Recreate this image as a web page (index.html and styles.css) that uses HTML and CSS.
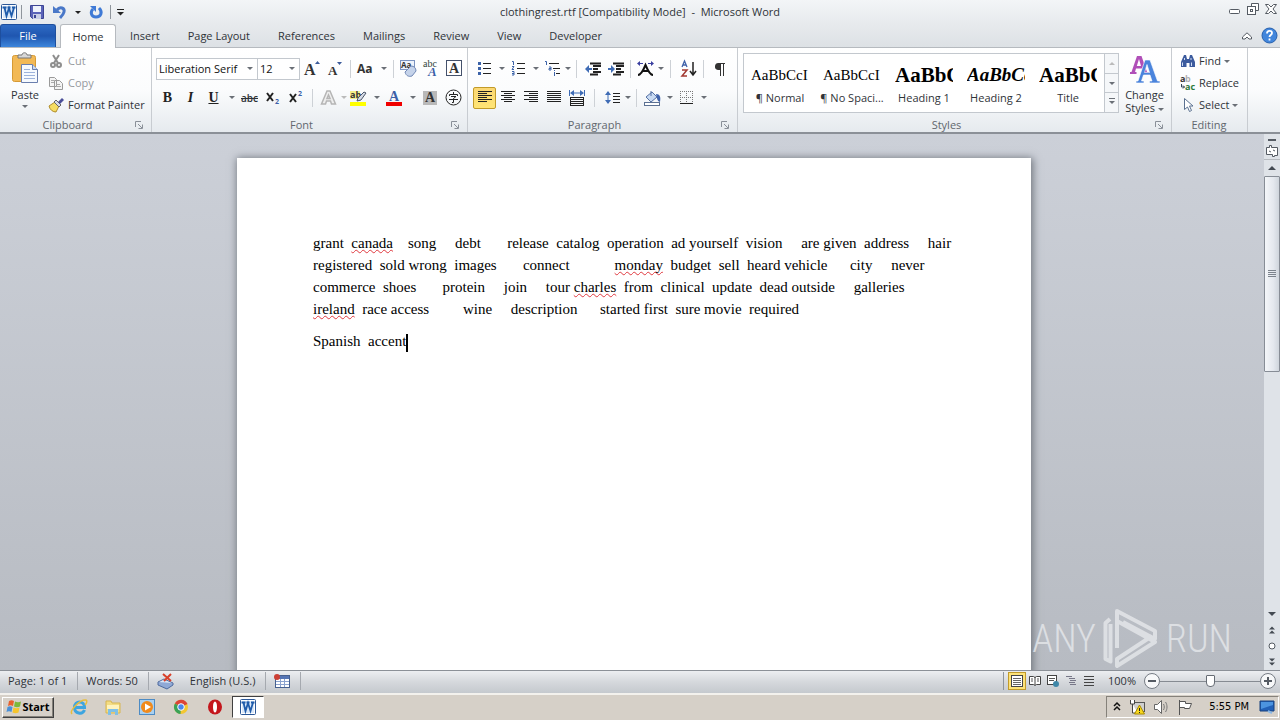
FILE: index.html
```
<!DOCTYPE html>
<html lang="en">
<head>
    <meta charset="UTF-8">
    <meta name="viewport" content="width=device-width, initial-scale=1.0">
    <title>clothingrest.rtf [Compatibility Mode] - Microsoft Word</title>
    <link rel="stylesheet" href="styles.css">
</head>
<body>
    <div class="window">
        <header class="titlebar">
            <div class="quick">
                <svg width="18" height="18" viewBox="0 0 18 18"><rect x="1.5" y="1.5" width="15" height="15" rx="1" fill="#fff" stroke="#2b5797"/><rect x="3" y="3" width="12" height="12" fill="#dbe8f8"/><path d="M2.500 4.500h4M7.500 4.500h3M12 4.500h3.500M4.500 4.500L6.500 13 9 5l2.500 8 2.500-8.500" fill="none" stroke="#1f5cab" stroke-width="1.800"/></svg>
                <span class="bar"></span>
                <button class="tool" aria-label="Save"><svg width="16" height="16" viewBox="0 0 16 16"><path d="M1.5 1.5h13v13h-11l-2-2z" fill="#5a63b8" stroke="#3c4494"/><rect x="4" y="2" width="8" height="6" fill="#eef2fb"/><rect x="4" y="10" width="8" height="5" fill="#c9cfe6"/><rect x="5" y="11" width="2" height="3" fill="#3c4494"/></svg></button>
                <button class="tool" aria-label="Undo"><svg width="16" height="16" viewBox="0 0 16 16"><path d="M5 6c3-4 8-2 7 2-.5 2-2 4-4 6" fill="none" stroke="#4a78c8" stroke-width="3"/><path d="M1 2v7h8z" fill="#4a78c8"/></svg></button>
                <button class="arrow" aria-label="Undo history"><i class="tri dark"></i></button>
                <button class="tool" aria-label="Repeat"><svg width="16" height="16" viewBox="0 0 16 16"><path d="M5 5c-3 3-2 8 3 8s7-5 3-9" fill="none" stroke="#3f7ad6" stroke-width="3"/><path d="M2 2h6v6z" fill="#3f7ad6"/></svg></button>
                <span class="bar"></span>
                <button class="arrow" aria-label="Customize toolbar"><svg width="7" height="7" viewBox="0 0 7 7"><path d="M0 .5h7" stroke="#222"/><path d="M0 3h7L3.500 6.500z" fill="#222"/></svg></button>
            </div>
            <h1>clothingrest.rtf [Compatibility Mode]&nbsp; -&nbsp; Microsoft Word</h1>
            <div class="controls">
                <button aria-label="Minimize"><svg width="12" height="12" viewBox="0 0 12 12"><rect x=".5" y="6.500" width="10" height="4" rx="1" fill="#fff" stroke="#555b63"/></svg></button>
                <button aria-label="Restore"><svg width="12" height="12" viewBox="0 0 12 12"><path d="M4.500 3.500v-3h7v7h-3" fill="#fff" stroke="#555b63"/><rect x=".5" y="3.500" width="8" height="8" fill="#fff" stroke="#555b63"/><rect x="3.500" y="6.500" width="2" height="2" fill="none" stroke="#555b63"/></svg></button>
                <button aria-label="Close"><svg width="12" height="12" viewBox="0 0 12 12"><path d="M.5 1.500h3l2.500 2.500 2.500-2.500h3L8 6l3.500 4.500h-3L6 8l-2.500 2.500h-3L4 6z" fill="#fff" stroke="#555b63"/></svg></button>
            </div>
        </header>

        <nav class="tabs">
            <button class="file">File</button>
            <button class="active">Home</button>
            <button>Insert</button>
            <button>Page Layout</button>
            <button>References</button>
            <button>Mailings</button>
            <button>Review</button>
            <button>View</button>
            <button>Developer</button>
            <div class="help">
                <svg width="10" height="8" viewBox="0 0 10 8"><path d="M.5 5L5 .8 9.500 5v2H7L5 5 3 7H.5z" fill="#fff" stroke="#555b63"/></svg>
                <svg width="17" height="17" viewBox="0 0 17 17"><circle cx="8.500" cy="8.500" r="7.500" fill="#4286dc" stroke="#2861ad"/><path d="M6 6.500c0-3.500 5-3.500 5-.5 0 2-2.500 2-2.500 4M8.500 11.500v2" fill="none" stroke="#fff" stroke-width="1.800"/></svg>
            </div>
        </nav>

        <div class="ribbon">
            <section class="group clipboard">
                <div class="body">
                    <button class="big">
                        <svg width="28" height="32" viewBox="0 0 28 32"><rect x="1.500" y="3.500" width="23" height="26" rx="2" fill="#f2b956" stroke="#d69a35"/><path d="M7 6V3h4c0-3 5-3 5 0h4v3z" fill="#d8d8d8" stroke="#777"/><path d="M10.500 12.500h11l5 5v13h-16z" fill="#f6faff" stroke="#6a7fae"/><path d="M21.500 12.500v5h5" fill="#cbdaf0" stroke="#6a7fae"/><path d="M13 17.500h6M13 20.500h11M13 23.500h11M13 26.500h11" stroke="#9db3dc"/></svg>
                        <span>Paste</span>
                        <i class="tri"></i>
                    </button>
                    <div class="stack">
                        <button class="line off"><svg width="16" height="16" viewBox="0 0 16 16"><path d="M5 2l5 8M11 2l-5 8" stroke="#8e8e8e" stroke-width="2"/><circle cx="5" cy="12" r="2" fill="none" stroke="#8e8e8e" stroke-width="2"/><circle cx="11" cy="12" r="2" fill="none" stroke="#8e8e8e" stroke-width="2"/></svg>Cut</button>
                        <button class="line off"><svg width="16" height="16" viewBox="0 0 16 16"><path d="M1.500 2.500h5l2 2v7h-7zM6.500 5.500h5l3 3v6h-8z" fill="#f4f4f4" stroke="#9a9a9a"/><path d="M3 5.500h3M3 7.500h3M8 9.500h4M8 11.500h5" stroke="#aaa"/></svg>Copy</button>
                        <button class="line"><svg width="16" height="16" viewBox="0 0 16 16"><path d="M1 9l6-4 4 4-3 6c-3 0-6-2-7-6z" fill="#f5dc62" stroke="#b08d2c"/><path d="M6 5l2-2 5 5-2 2z" fill="#d5d9e8" stroke="#666"/><path d="M10 5l4-4 2 2-4 4z" fill="#4a4e98"/></svg>Format Painter</button>
                    </div>
                </div>
                <footer><h2>Clipboard</h2><svg class="launch" width="8" height="8" viewBox="0 0 8 8"><path d="M.5 6V.5H6M3 3l4 4M7.500 3.500v4h-4" fill="none" stroke="#8a9099"/></svg></footer>
            </section>

            <section class="group font">
                <div class="body rows">
                    <div class="row">
                        <span class="combo name"><select aria-label="Font"><option>Liberation Serif</option></select></span>
                        <span class="combo size"><select aria-label="Font size"><option>12</option></select></span>
                        <button class="tool" aria-label="Grow font"><svg width="17" height="17" viewBox="0 0 17 17"><text x="0" y="15" class="serif" font-size="16">A</text><path d="M11 4l2.500-3L16 4z" fill="#3b5a9a"/></svg></button>
                        <button class="tool" aria-label="Shrink font"><svg width="17" height="17" viewBox="0 0 17 17"><text x="1" y="15" class="serif" font-size="13">A</text><path d="M10 2l2.500 3L15 2z" fill="#3b5a9a"/></svg></button>
                        <span class="sep"></span>
                        <button class="tool" aria-label="Change case"><svg width="17" height="17" viewBox="0 0 17 17"><text x="0" y="13" class="sans" font-size="12">Aa</text></svg></button>
                        <button class="arrow" aria-label="Case options"><i class="tri"></i></button>
                        <span class="sep"></span>
                        <button class="tool" aria-label="Clear formatting"><svg width="17" height="17" viewBox="0 0 17 17"><rect x=".5" y=".5" width="14" height="9" fill="#eef3fb" stroke="#7b93c0"/><text x="1" y="8" class="sans" font-size="8">Aa</text><path d="M5 12l6-6c3 0 5 2 5 5l-4 5c-3 1-6 0-7-4z" fill="#c5d3ea" stroke="#7188b5"/></svg></button>
                        <button class="tool" aria-label="Phonetic guide"><svg width="17" height="17" viewBox="0 0 17 17"><text x="0" y="7" class="ruby" font-size="10">abc</text><text x="5" y="16" class="serif blue" font-style="italic" font-size="13">A</text></svg></button>
                        <button class="tool" aria-label="Character border"><svg width="17" height="17" viewBox="0 0 17 17"><rect x=".5" y=".5" width="15" height="15" fill="#fff" stroke="#44516b"/><text x="3" y="13" class="serif" font-size="14">A</text></svg></button>
                    </div>
                    <div class="row">
                        <button class="tool mark"><b>B</b></button>
                        <button class="tool mark"><em>I</em></button>
                        <button class="tool mark"><u>U</u></button>
                        <button class="arrow" aria-label="Underline style"><i class="tri"></i></button>
                        <button class="tool strike">abc</button>
                        <button class="tool" aria-label="Subscript"><svg width="17" height="17" viewBox="0 0 17 17"><path d="M3 4l6 8M9 4l-6 8" stroke="#222" stroke-width="2"/><text x="11" y="15" class="sans blue" font-size="7">2</text></svg></button>
                        <button class="tool" aria-label="Superscript"><svg width="17" height="17" viewBox="0 0 17 17"><path d="M3 5l6 8M9 5l-6 8" stroke="#222" stroke-width="2"/><text x="11" y="7" class="sans blue" font-size="7">2</text></svg></button>
                        <span class="sep wide"></span>
                        <button class="tool" aria-label="Text effects"><svg width="17" height="17" viewBox="0 0 17 17"><path d="M1.500 15L7 2h3l5.500 13h-4l-1-3h-4l-1 3zM7 9.500h3L8.500 6z" fill="#eee" stroke="#b5b5b5" stroke-width="1.500"/></svg></button>
                        <button class="arrow tight" aria-label="Text effect options"><i class="tri pale"></i></button>
                        <button class="tool" aria-label="Highlight"><svg width="17" height="17" viewBox="0 0 17 17"><rect x="0" y="13" width="16" height="4" fill="#ff0"/><rect x="0" y="2" width="10" height="8" fill="#f5f08a"/><text x="0" y="9" class="sans" font-size="9">ab</text><path d="M7 12l1-3 6-6 2 1-5 7z" fill="#d5dbe6" stroke="#4a5568"/></svg></button>
                        <button class="arrow" aria-label="Highlight color"><i class="tri"></i></button>
                        <button class="tool" aria-label="Font color"><svg width="17" height="17" viewBox="0 0 17 17"><rect x="0" y="13" width="16" height="4" fill="#f00000"/><text x="3" y="12" class="serif blue" font-size="14">A</text></svg></button>
                        <button class="arrow" aria-label="Font color options"><i class="tri"></i></button>
                        <button class="tool" aria-label="Character shading"><svg width="17" height="17" viewBox="0 0 17 17"><rect x="1" y="2" width="14" height="14" fill="#b9b9b9"/><text x="3" y="13" class="serif" font-size="14">A</text></svg></button>
                        <button class="tool" aria-label="Enclose characters"><svg width="17" height="17" viewBox="0 0 17 17"><circle cx="8.500" cy="8.500" r="7.500" fill="none" stroke="#222"/><path d="M8.500 3v2M4.500 7V5.500h8V7M6 7.500h5L8.500 9.500v4H7M4 10.500h9" fill="none" stroke="#222"/></svg></button>
                    </div>
                </div>
                <footer><h2>Font</h2><svg class="launch" width="8" height="8" viewBox="0 0 8 8"><path d="M.5 6V.5H6M3 3l4 4M7.500 3.500v4h-4" fill="none" stroke="#8a9099"/></svg></footer>
            </section>

            <section class="group para">
                <div class="body rows">
                    <div class="row">
                        <button class="tool" aria-label="Bullets"><svg width="15" height="15" viewBox="0 0 15 15"><path d="M1 2.500h3M1 7.500h3M1 12.500h3" stroke="#3b62a8" stroke-width="3"/><path d="M6 2.500h8M6 7.500h8M6 12.500h8" stroke="#222"/></svg></button>
                        <button class="arrow" aria-label="Bullet options"><i class="tri"></i></button>
                        <button class="tool" aria-label="Numbering"><svg width="15" height="15" viewBox="0 0 15 15"><path d="M1 .5h1.500V4M1 5.500h2L1 8.500h2M1 10.500h2v3.500H1M1 12.500h2" fill="none" stroke="#3b62a8"/><path d="M6 2.500h8M6 7.500h8M6 12.500h8" stroke="#222"/></svg></button>
                        <button class="arrow" aria-label="Numbering options"><i class="tri"></i></button>
                        <button class="tool" aria-label="Multilevel list"><svg width="17" height="15" viewBox="0 0 17 15"><path d="M1 .5h1.500V4M5 6h2v3H5V7.500h2M10.500 11v4M10.500 9v1" fill="none" stroke="#3b62a8"/><path d="M5 2.500h10M9 7.500h7M12 12.500h4" stroke="#222"/></svg></button>
                        <button class="arrow tight" aria-label="Multilevel options"><i class="tri"></i></button>
                        <span class="sep wide"></span>
                        <button class="tool" aria-label="Decrease indent"><svg width="16" height="14" viewBox="0 0 16 14"><path d="M5 1.500h11M8 4h8M8 7h5M8 10h8M5 12.500h8" stroke="#222" stroke-width="2"/><path d="M0 7l4-4v3h3v2H4v3z" fill="#3f6cb5"/></svg></button>
                        <button class="tool" aria-label="Increase indent"><svg width="16" height="14" viewBox="0 0 16 14"><path d="M5 1.500h11M8 4h8M8 7h5M8 10h8M5 12.500h8" stroke="#222" stroke-width="2"/><path d="M7 7L3 3v3H0v2h3v3z" fill="#3f6cb5"/></svg></button>
                        <span class="sep"></span>
                        <button class="tool" aria-label="Asian layout"><svg width="17" height="15" viewBox="0 0 17 15"><path d="M1 14c3 0 5-4 7.500-10C11 10 13 14 16 14M5 10h7" fill="none" stroke="#111" stroke-width="2"/><path d="M0 2.500L3 0v2h3v1H3v2zM17 2.500L14 0v2h-3v1h3v2z" fill="#3a3fa0"/></svg></button>
                        <button class="arrow tight" aria-label="Asian layout options"><i class="tri"></i></button>
                        <span class="sep wider"></span>
                        <button class="tool" aria-label="Sort"><svg width="16" height="17" viewBox="0 0 16 17"><path d="M1 7l2.500-6L6 7M2 5h3" fill="none" stroke="#3f62aa" stroke-width="1.300"/><path d="M1 10h5l-5 6h5" fill="none" stroke="#a33a33" stroke-width="1.500"/><path d="M12 2v12M9 11l3 4 3-4" fill="none" stroke="#222" stroke-width="1.500"/></svg></button>
                        <span class="sep"></span>
                        <button class="tool" aria-label="Show paragraph marks"><svg width="12" height="14" viewBox="0 0 12 14"><path d="M6 1h6v1h-1v12h-1V2H8v12H7V8H5a3.500 3.500 0 0 1 1-7z" fill="#333"/></svg></button>
                    </div>
                    <div class="row">
                        <button class="tool on" aria-label="Align left"><svg width="14" height="13" viewBox="0 0 14 13"><path d="M0 .5h14M0 2.500h9M0 4.500h14M0 6.500h9M0 8.500h14M0 10.500h9" stroke="#222"/></svg></button>
                        <button class="tool" aria-label="Center"><svg width="14" height="13" viewBox="0 0 14 13"><path d="M0 .5h14M3 2.500h8M0 4.500h14M3 6.500h8M0 8.500h14M3 10.500h8" stroke="#222"/></svg></button>
                        <button class="tool" aria-label="Align right"><svg width="14" height="13" viewBox="0 0 14 13"><path d="M0 .5h14M5 2.500h9M0 4.500h14M5 6.500h9M0 8.500h14M5 10.500h9" stroke="#222"/></svg></button>
                        <button class="tool" aria-label="Justify"><svg width="14" height="13" viewBox="0 0 14 13"><path d="M0 .5h14M0 2.500h14M0 4.500h14M0 6.500h14M0 8.500h14M0 10.500h14" stroke="#222"/></svg></button>
                        <button class="tool" aria-label="Distributed"><svg width="16" height="16" viewBox="0 0 16 16"><path d="M.5 0v6M15.500 0v6M2 3h12" stroke="#3f6cb5"/><path d="M1 3l4-3v6zM15 3l-4-3v6z" fill="#3f6cb5"/><path d="M1 7.500h14M2 9.500h12M2 11.500h12M2 13.500h12M1 15.500h14M1.500 7v9M14.500 7v9" stroke="#222"/></svg></button>
                        <span class="sep wider"></span>
                        <button class="tool" aria-label="Line spacing"><svg width="16" height="15" viewBox="0 0 16 15"><path d="M3 2v11" stroke="#3f6cb5"/><path d="M0 5l3-4 3 4zM0 10l3 4 3-4z" fill="#3f6cb5"/><path d="M8 3.500h7M8 6.500h7M8 9.500h7M8 12.500h7" stroke="#222"/></svg></button>
                        <button class="arrow tight" aria-label="Spacing options"><i class="tri"></i></button>
                        <span class="sep wide"></span>
                        <button class="tool" aria-label="Shading"><svg width="17" height="16" viewBox="0 0 17 16"><path d="M2 7l6-5 5 5-6 5z" fill="#c8daf2" stroke="#5571a5"/><path d="M7 1v5" stroke="#5571a5"/><path d="M12 4c4 0 5 3 4 8-3-1-3-4-4-8z" fill="#3f62aa"/><rect x=".5" y="12.500" width="15" height="3" fill="#fff" stroke="#5c7193"/></svg></button>
                        <button class="arrow" aria-label="Shading color"><i class="tri"></i></button>
                        <button class="tool" aria-label="Borders"><svg width="14" height="14" viewBox="0 0 14 14"><path d="M.5 0v13M6.500 0v13M12.500 0v13M0 .5h13M0 6.500h13" stroke="#777" stroke-dasharray="1 1"/><path d="M0 12.500h13" stroke="#222"/></svg></button>
                        <button class="arrow" aria-label="Border options"><i class="tri"></i></button>
                    </div>
                </div>
                <footer><h2>Paragraph</h2><svg class="launch" width="8" height="8" viewBox="0 0 8 8"><path d="M.5 6V.5H6M3 3l4 4M7.500 3.500v4h-4" fill="none" stroke="#8a9099"/></svg></footer>
            </section>

            <section class="group styles">
                <div class="body">
                    <div class="gallery">
                        <button class="style"><span class="sample">AaBbCcI</span><span>¶ Normal</span></button>
                        <button class="style"><span class="sample">AaBbCcI</span><span>¶ No Spaci...</span></button>
                        <button class="style"><span class="sample heading">AaBbC</span><span>Heading 1</span></button>
                        <button class="style"><span class="sample slant">AaBbCc</span><span>Heading 2</span></button>
                        <button class="style"><span class="sample heading">AaBbC</span><span>Title</span></button>
                        <div class="scroller">
                            <button aria-label="Scroll up"><i class="tri up pale"></i></button>
                            <button aria-label="Scroll down"><i class="tri"></i></button>
                            <button aria-label="More styles"><i class="tri more"></i></button>
                        </div>
                    </div>
                    <button class="big change">
                        <svg width="30" height="30" viewBox="0 0 30 30"><path d="M0 20v-2h1.500L7 2h4.500L17 18h2v2h-7v-2h1l-1-3.500H6L5 18h1.500v2zM6.800 12H11L9 5z" fill="#b04fb8"/><path d="M6 29v-2h2l7-21h5l7.500 21H30v2H19.500v-2H22l-2-6h-6.500l-2 6H14v2zM14.500 18.500h5l-2.500-8z" fill="#4a84dc" stroke="#fff" stroke-width=".6"/></svg>
                        <span>Change</span>
                        <span>Styles <i class="tri"></i></span>
                    </button>
                </div>
                <footer><h2>Styles</h2><svg class="launch" width="8" height="8" viewBox="0 0 8 8"><path d="M.5 6V.5H6M3 3l4 4M7.500 3.500v4h-4" fill="none" stroke="#8a9099"/></svg></footer>
            </section>

            <section class="group editing">
                <div class="body">
                    <div class="stack">
                        <button class="line"><svg width="16" height="16" viewBox="0 0 16 16"><path d="M1 14V9l3-7h2l1 4h2l1-4h2l3 7v5H9.500v-4h-3v4z" fill="#3c5b9e"/><path d="M2.500 13V9.500M11.500 13V9.500M4.500 5v2M11 5v2" stroke="#cfdcf3"/></svg>Find <i class="tri"></i></button>
                        <button class="line"><svg width="16" height="16" viewBox="0 0 16 16"><text x="0" y="7" class="sans" font-size="9">a</text><text x="5" y="7" class="sans" font-size="9" fill-opacity=".4">b</text><text x="5" y="15" class="sans green" font-size="9">ac</text><path d="M1.500 9v3h3M3 10.500L4.500 12 3 13.500" fill="none" stroke="#345"/></svg>Replace</button>
                        <button class="line"><svg width="16" height="16" viewBox="0 0 16 16"><path d="M4.500 1.500v11l3-2.500 2 4.500 2-1-2-4.500h3.500z" fill="#fff" stroke="#5b7191"/></svg>Select <i class="tri"></i></button>
                    </div>
                </div>
                <footer class="plain"><h2>Editing</h2></footer>
            </section>
        </div>

        <div class="workspace">
            <main class="desk">
                <article class="page">
                    <p>grant  <u class="typo">canada</u>    song     debt       release  catalog  operation  ad yourself  vision     are given  address     hair
registered  sold wrong  images       connect            <u class="typo">monday</u>  budget  sell  heard vehicle      city     never
commerce  shoes       protein     join     tour <u class="typo">charles</u>  from  clinical  update  dead outside     galleries
<u class="typo">ireland</u>  race access         wine     description      started first  sure movie  required</p>
                    <p>Spanish  accent<span class="caret"></span></p>
                </article>
                <div class="watermark">
                    <span>ANY</span>
                    <svg width="56" height="62" viewBox="0 0 56 62"><path d="M7 11L2.500 15v36l5 2.500V16M14 40V3l38 20v8L20 14M14 13l38 21-38 24v-7l35-23" fill="none" stroke="#e6e8eb" stroke-width="4" stroke-linejoin="round"/></svg>
                    <span>RUN</span>
                </div>
            </main>
            <aside class="scroll">
                <button aria-label="Split"><svg width="8" height="2" viewBox="0 0 8 2"><path d="M0 1h8" stroke="#555b63" stroke-width="2"/></svg></button>
                <button class="ruler" aria-label="Ruler"><svg width="12" height="12" viewBox="0 0 12 12"><path d="M.5 2.500h3V.5h2v2h6v8h-3v1h-2v-2h-6zM3 6l2 1M7 5l2 1" fill="#fff" stroke="#555b63"/></svg></button>
                <button class="step" aria-label="Scroll up"><i class="tri up large"></i></button>
                <div class="thumb"><svg width="8" height="7" viewBox="0 0 8 7"><path d="M0 .5h8M0 2.500h8M0 4.500h8M0 6.500h8" stroke="#7c838c"/></svg></div>
                <div class="track"></div>
                <button class="step" aria-label="Scroll down"><i class="tri large"></i></button>
                <button class="step" aria-label="Previous page"><svg width="8" height="8" viewBox="0 0 8 8"><path d="M1 3.500L4 .5l3 3zM1 7.500l3-3 3 3z" fill="#444a52"/></svg></button>
                <button class="step" aria-label="Browse object"><svg width="8" height="8" viewBox="0 0 8 8"><circle cx="4" cy="4" r="3" fill="#fff" stroke="#555b63"/></svg></button>
                <button class="step" aria-label="Next page"><svg width="8" height="8" viewBox="0 0 8 8"><path d="M1 .5l3 3 3-3zM1 4.500l3 3 3-3z" fill="#444a52"/></svg></button>
            </aside>
        </div>

        <div class="status">
            <span class="cell">Page: 1 of 1</span>
            <span class="cell">Words: 50</span>
            <span class="cell lang"><svg width="17" height="16" viewBox="0 0 17 16"><path d="M1 9l6-3 9 4-6 4z" fill="#dce8f8" stroke="#4e6b9e"/><path d="M1 9v3l9 4 6-4v-2" fill="#8fa9d6" stroke="#4e6b9e"/><path d="M6 1l8 7M14 1L7 8" stroke="#d8402a" stroke-width="2"/></svg>English (U.S.)</span>
            <span class="cell"><svg width="16" height="14" viewBox="0 0 16 14"><rect x="1.500" y="1.500" width="14" height="12" fill="#fff" stroke="#46608f"/><rect x="2" y="2" width="13" height="3" fill="#5575b5"/><path d="M2 7.500h13M2 10.500h13M6.500 5v8M10.500 5v8" stroke="#8ca3cf"/><circle cx="3" cy="3" r="3" fill="#cc3f35"/></svg></span>
            <div class="views">
                <button class="on" aria-label="Print layout"><svg width="12" height="12" viewBox="0 0 12 12"><rect x=".5" y=".5" width="11" height="11" fill="#fff" stroke="#444"/><path d="M2 3.500h8M2 5.500h8M2 7.500h8M2 9.500h8" stroke="#666"/></svg></button>
                <button aria-label="Full screen reading"><svg width="12" height="12" viewBox="0 0 12 12"><path d="M.5 1.500h4l1.500 1 1.500-1h4v8h-4l-1.500 1-1.500-1h-4zM6 2v8" fill="#fff" stroke="#444"/><path d="M2 4h2M2 6h2M8 4h2M8 6h2" stroke="#555"/></svg></button>
                <button aria-label="Web layout"><svg width="12" height="12" viewBox="0 0 12 12"><rect x=".5" y=".5" width="9" height="9" fill="#fff" stroke="#444"/><path d="M2 3.500h6M2 5.500h5" stroke="#555"/><circle cx="9" cy="9" r="3" fill="#3f87a8"/></svg></button>
                <button aria-label="Outline"><svg width="12" height="12" viewBox="0 0 12 12"><path d="M1 1.500h6M4 3.500h6M5 5.500h6M4 7.500h6M5 9.500h6" stroke="#778"/></svg></button>
                <button aria-label="Draft"><svg width="12" height="12" viewBox="0 0 12 12"><path d="M1 1.500h10M1 4.500h10M1 7.500h10M1 10.500h10" stroke="#444"/></svg></button>
            </div>
            <label class="percent" for="zoom">100%</label>
            <button class="round" aria-label="Zoom out"><svg width="8" height="8" viewBox="0 0 8 8"><path d="M0 4h8" stroke="#555b63" stroke-width="2"/></svg></button>
            <input id="zoom" type="range" min="0" max="200" value="100">
            <button class="round" aria-label="Zoom in"><svg width="8" height="8" viewBox="0 0 8 8"><path d="M0 4h8M4 0v8" stroke="#555b63" stroke-width="2"/></svg></button>
        </div>

        <div class="taskbar">
            <button class="start"><svg width="16" height="16" viewBox="0 0 16 16"><path d="M3 2c2-1 3-1 5 0L7 7c-2-1-3-1-5 0z" fill="#e8602c"/><path d="M9 2.500c2 1 4 1 6 0l-1 5c-2 1-4 1-6 0z" fill="#7cb83a"/><path d="M1.500 8c2-1 3-1 5 0l-1 5c-2-1-3-1-5 0z" fill="#4a90d8"/><path d="M7.500 8.500c2 1 4 1 6 0l-1 5c-2 1-4 1-6 0z" fill="#f6c52d"/></svg>Start</button>
            <div class="apps">
                <button aria-label="Internet Explorer"><svg width="18" height="18" viewBox="0 0 18 18"><path d="M14.500 12c-2 5-10 4-10-2.500C4.500 2 14.500 2 14.500 9.500h-9" fill="none" stroke="#3da5e0" stroke-width="3"/><path d="M2 16C-1 13 10 1 16 2c2 1 0 4-1 5" fill="none" stroke="#e7bd3c" stroke-width="1.500"/></svg></button>
                <button aria-label="Explorer"><svg width="18" height="18" viewBox="0 0 18 18"><path d="M2 3h5l1 2h8v10H2z" fill="#f3dc83" stroke="#d7b550"/><path d="M3 7h12v4H3z" fill="#fff3bd"/><path d="M4 17v-6h10v6h-3v-3H7v3z" fill="#7fc0e6"/></svg></button>
                <button aria-label="Media Player"><svg width="18" height="18" viewBox="0 0 18 18"><rect x="1.500" y="1.500" width="15" height="15" fill="#a9d0f0" stroke="#4d8bc4"/><circle cx="9" cy="9" r="6" fill="#f08a1c"/><path d="M7 5.500l6 3.500-6 3.500z" fill="#fff"/></svg></button>
                <button aria-label="Chrome"><svg width="18" height="18" viewBox="0 0 18 18"><circle cx="9" cy="9" r="7" fill="#f3c732"/><path d="M9 9L2.900 5.500A7 7 0 0 1 15.500 6z" fill="#dc4437"/><path d="M9 9L2.900 5.500A7 7 0 0 0 8.500 16z" fill="#3ba257"/><circle cx="9" cy="9" r="3.300" fill="#4a87ec" stroke="#fff"/></svg></button>
                <button aria-label="Opera"><svg width="18" height="18" viewBox="0 0 18 18"><ellipse cx="9" cy="9" rx="7" ry="7.500" fill="#c4161c"/><ellipse cx="9" cy="9" rx="2" ry="5.500" fill="#fff"/></svg></button>
                <button class="open" aria-label="Word"><svg width="18" height="18" viewBox="0 0 18 18"><rect x="1.500" y="1.500" width="15" height="15" rx="1" fill="#fff" stroke="#2b5797"/><rect x="3" y="3" width="12" height="12" fill="#dbe8f8"/><path d="M2.500 4.500h4M7.500 4.500h3M12 4.500h3.500M4.500 4.500L6.500 13 9 5l2.500 8 2.500-8.500" fill="none" stroke="#1f5cab" stroke-width="1.800"/></svg></button>
            </div>
            <div class="tray">
                <svg width="8" height="10" viewBox="0 0 8 10"><path d="M1 4l3-3 3 3M1 8l3-3 3 3" fill="none" stroke="#111" stroke-width="1.500"/></svg>
                <svg width="16" height="16" viewBox="0 0 16 16"><rect x="3.500" y="3.500" width="12" height="9" fill="#cfcfcf" stroke="#555"/><path d="M1.500 1v4h4V1M3.500 5v9H9" fill="#fff" stroke="#444"/><path d="M10.500 6l5 9h-10z" fill="#f7d71e" stroke="#a88a00"/><path d="M10.500 9v3M10.500 13v1" stroke="#222"/></svg>
                <svg width="16" height="16" viewBox="0 0 16 16"><path d="M1.500 5.500h3l4-4v13l-4-4h-3z" fill="#fff" stroke="#666"/><path d="M10.500 5c1 2 1 4 0 6M12.500 3c2 3 2 7 0 10" fill="none" stroke="#777"/></svg>
                <svg width="16" height="16" viewBox="0 0 16 16"><path d="M2.500 1v15M2.500 2.500h6v2h6l-2 5h-5v-1h-5z" fill="#fff" stroke="#555"/></svg>
                <time>5:55 PM</time>
                <svg width="16" height="14" viewBox="0 0 16 14"><path d="M1 1h14v10H1z" fill="#2261b8" stroke="#17407c"/><path d="M2 2h12v3L2 9z" fill="#4c94e0"/><path d="M9 11l4 2" stroke="#89b8e8" stroke-width="2"/></svg>
            </div>
        </div>
    </div>
</body>
</html>
```
FILE: styles.css
```
* {
    box-sizing: border-box;
}
body {
    margin: 0;
    font-family: "Open Sans", "Noto Sans", sans-serif;
    font-size: 11px;
    line-height: 14px;
    color: #2f3338;
}
button {
    display: flex;
    align-items: center;
    justify-content: center;
    margin: 0;
    padding: 0;
    border: none;
    background: none;
    font: inherit;
    color: inherit;
}
svg {
    display: block;
    flex: none;
    overflow: visible;
}
h1, h2 {
    margin: 0;
    font-size: 11px;
    font-weight: normal;
}
.window {
    display: flex;
    flex-direction: column;
    height: 100vh;
    overflow: hidden;
}

/* Title bar */
.titlebar {
    display: grid;
    grid-template-columns: 1fr auto 1fr;
    align-items: center;
    height: 24px;
    background: linear-gradient(#f3f5f7, #e7eaed);
}
.quick {
    display: flex;
    align-items: center;
}
.quick .bar {
    width: 1px;
    height: 14px;
    margin: 0 3px;
    background: #8f959c;
}
.controls {
    display: flex;
    justify-content: flex-end;
    gap: 6px;
    padding: 0 3px 6px 0;
}

/* Tabs */
.tabs {
    display: flex;
    height: 24px;
    background: linear-gradient(#e7eaed, #dde1e5);
    border-bottom: 1px solid #b6babf;
}
.tabs button {
    padding: 0 14px;
}
.tabs .file {
    width: 56px;
    margin-right: 4px;
    border: 1px solid #1e4f9e;
    border-bottom: none;
    border-radius: 3px 3px 0 0;
    background: linear-gradient(#2f6bc4, #1f56b0 50%, #3d86dc);
    color: #fff;
}
.tabs .active {
    width: 56px;
    height: 24px;
    border: 1px solid #b6babf;
    border-bottom: none;
    border-radius: 3px 3px 0 0;
    background: #fff;
}
.help {
    display: flex;
    align-items: center;
    gap: 9px;
    margin-left: auto;
    padding-right: 2px;
}

/* Ribbon */
.ribbon {
    display: flex;
    height: 86px;
    background: linear-gradient(#fff, #fbfcfd 50%, #e6eaee);
    border-bottom: 2px solid #8b9097;
}
.group {
    display: flex;
    flex-direction: column;
    border-right: 1px solid #c8ccd1;
}
.body {
    display: flex;
    flex: 1;
    padding: 2px 0 0 6px;
}
.group footer {
    display: grid;
    grid-template-columns: 1fr 15px;
    align-items: center;
    height: 14px;
    padding-right: 1px;
    color: #62676e;
}
.group .plain {
    display: block;
}
.group h2 {
    text-align: center;
}
.clipboard {
    width: 152px;
}
.font {
    width: 316px;
}
.para {
    width: 270px;
}
.styles {
    width: 434px;
}
.editing {
    width: 76px;
}
.font .body {
    padding-left: 4px;
}
.para .body, .styles .body {
    padding-left: 5px;
}
.rows {
    flex-direction: column;
    gap: 6px;
    padding-top: 9px;
}
.row {
    display: flex;
    align-items: center;
    height: 23px;
}
.tool {
    width: 23px;
    height: 22px;
}
.tool.on {
    border: 1px solid #c29b29;
    border-radius: 2px;
    background: linear-gradient(#fbd774, #ffe575);
}
.arrow {
    width: 13px;
    height: 22px;
}
.para .arrow {
    width: 11px;
}
.arrow.tight {
    width: 7px;
}
.tri {
    display: inline-block;
    border: 3px solid transparent;
    border-top-color: #6a6f76;
    border-bottom: none;
    vertical-align: middle;
}
.tri.dark {
    border-top-color: #222;
}
.tri.pale {
    border-top-color: #bbb;
}
.tri.up {
    transform: rotate(180deg);
}
.tri.large {
    border-width: 4px 4px 0;
    border-top-color: #444a52;
}
.tri.more {
    position: relative;
}
.tri.more::before {
    content: "";
    position: absolute;
    left: -3px;
    top: -6px;
    width: 6px;
    height: 1px;
    background: #6a6f76;
}
.sep {
    display: flex;
    justify-content: center;
    width: 7px;
    height: 18px;
}
.sep::before {
    content: "";
    width: 1px;
    background: #cdd1d6;
}
.sep.wide {
    width: 10px;
}
.sep.wider {
    width: 13px;
}
.big {
    flex-direction: column;
    justify-content: flex-start;
    width: 38px;
    padding-top: 2px;
}
.big span {
    margin-top: 4px;
}
.big .tri {
    margin-top: 3px;
}
.stack {
    display: flex;
    flex-direction: column;
    margin-left: 4px;
}
.line {
    justify-content: flex-start;
    gap: 4px;
    height: 22px;
    white-space: nowrap;
}
.line.off {
    color: #96999d;
}
.editing .body {
    padding-left: 4px;
}
.editing .line {
    gap: 3px;
}
.combo {
    display: flex;
    position: relative;
    height: 22px;
    border: 1px solid #c3c8ce;
}
.combo::after {
    content: "";
    position: absolute;
    right: 4px;
    top: 8px;
    border: 3px solid transparent;
    border-top-color: #6a6f76;
    border-bottom: none;
}
.combo.name {
    width: 102px;
}
.combo.size {
    width: 42px;
    border-left: none;
    margin-right: 1px;
}
.combo select {
    appearance: none;
    width: 100%;
    padding: 0 2px;
    border: none;
    background: #fff;
    font: inherit;
    color: #111;
}
.mark {
    font-family: "Liberation Serif", serif;
    font-size: 14px;
    font-weight: bold;
    color: #222;
}
.strike {
    font-size: 10px;
    font-weight: 600;
    text-decoration: line-through;
}
.serif {
    font-family: "Liberation Serif", serif;
    font-weight: bold;
    fill: #333;
}
.ruby {
    font-family: "Liberation Serif", serif;
    fill: #34453a;
}
.sans {
    font-family: "Open Sans", sans-serif;
    font-weight: bold;
    fill: #333;
}
.blue {
    fill: #3c5fa8;
}
.green {
    fill: #2d7a3a;
}

/* Style gallery */
.gallery {
    display: flex;
    height: 60px;
    margin-top: 3px;
    border: 1px solid #c3c8ce;
    background: #fff;
}
.style {
    flex-direction: column;
    justify-content: flex-start;
    width: 72px;
    padding: 8px 7px 0;
}
.sample {
    width: 58px;
    height: 26px;
    margin-bottom: 3px;
    overflow: hidden;
    font: 15px/26px "Liberation Serif", serif;
    text-align: left;
    color: #000;
}
.style span {
    white-space: nowrap;
}
.sample.heading {
    font-size: 21px;
    font-weight: bold;
}
.sample.slant {
    font-size: 19px;
    font-weight: bold;
    font-style: italic;
}
.scroller {
    display: flex;
    flex-direction: column;
    width: 14px;
    border-left: 1px solid #c3c8ce;
}
.scroller button {
    flex: 1;
    background: #f5f7f9;
}
.scroller button + button {
    border-top: 1px solid #c3c8ce;
}
.change {
    width: 51px;
    padding-top: 4px;
}
.change span {
    margin-top: 0;
    line-height: 13px;
    white-space: nowrap;
}
.change svg {
    margin-bottom: 4px;
}
.change .tri {
    margin-top: 0;
}

/* Document */
.workspace {
    display: flex;
    flex: 1;
    min-height: 0;
}
.desk {
    position: relative;
    flex: 1;
    padding: 24px 0 0 4px;
    overflow: hidden;
    background: linear-gradient(#ccd0d8, #b7bbc2);
}
.page {
    width: 794px;
    height: 1123px;
    margin: 0 auto;
    padding: 74px 76px;
    background: #fff;
    box-shadow: 1px 1px 8px 1px #6f747c;
    font: 15px/22px "Liberation Serif", serif;
    color: #000;
}
.page p {
    margin: 0 0 10px;
    white-space: pre;
}
.typo {
    text-decoration: underline wavy #e0383e 1px;
    text-decoration-skip-ink: none;
    text-underline-offset: 1px;
}
.caret {
    display: inline-block;
    width: 2px;
    height: 18px;
    background: #000;
    vertical-align: middle;
}
.watermark {
    position: absolute;
    right: 32px;
    bottom: 0;
    display: flex;
    align-items: center;
    gap: 7px;
    font: 300 38px/60px "Roboto Condensed", "Liberation Sans Narrow", "Roboto", sans-serif;
    color: #e6e8eb;
    opacity: 0.8;
}
.scroll {
    display: flex;
    flex-direction: column;
    width: 16px;
    padding-top: 4px;
    background: #dfe3e8;
}
.scroll button {
    height: 4px;
}
.scroll .ruler {
    height: 18px;
    border-bottom: 1px solid #b6babf;
}
.scroll .step {
    height: 16px;
}
.thumb {
    display: flex;
    align-items: center;
    justify-content: center;
    flex: 195;
    border: 1px solid #878d96;
    border-radius: 1px;
    background: linear-gradient(90deg, #f4f6f9, #e4e8ee 60%, #cfd5dc);
}
.track {
    flex: 236;
}

/* Status bar */
.status {
    display: flex;
    align-items: center;
    height: 23px;
    padding-bottom: 2px;
    border-top: 1px solid #8b9097;
    background: linear-gradient(#eceef1, #d5d8dc 50%, #c5c9ce);
}
.cell {
    display: flex;
    align-items: center;
    gap: 16px;
    height: 18px;
    padding: 0 10px 0 8px;
    border-right: 1px solid #a5a9af;
}
.views {
    display: flex;
    align-items: center;
    margin-left: auto;
    padding-left: 4px;
    border-left: 1px solid #8f959c;
}
.views button {
    width: 18px;
    height: 18px;
}
.views .on {
    border: 1px solid #c29b29;
    background: #fde37a;
}
.percent {
    margin: 0 8px 0 10px;
}
.round {
    width: 16px;
    height: 16px;
    border: 1px solid #767c84;
    border-radius: 50%;
    background: #f7f8f9;
}
.status input {
    appearance: none;
    width: 100px;
    height: 16px;
    margin: 0;
    background: linear-gradient(#868b92, #868b92) center / 100% 1px no-repeat;
}
.status input::-webkit-slider-thumb {
    appearance: none;
    width: 9px;
    height: 12px;
    border: 1px solid #666c74;
    border-radius: 1px 1px 4px 4px;
    background: #fff;
}
.status .round:last-child {
    margin-right: 4px;
}

/* Taskbar */
.taskbar {
    display: flex;
    align-items: center;
    height: 27px;
    padding-bottom: 1px;
    border-top: 2px solid #f3f1ed;
    background: #d6d0c8;
    color: #000;
}
.start {
    width: 52px;
    height: 21px;
    margin: 0 8px 0 2px;
    border: 1px solid;
    border-color: #fff #404040 #404040 #fff;
    box-shadow: inset -1px -1px #85817a;
    font-size: 11px;
    font-weight: bold;
}
.apps {
    display: flex;
    align-items: center;
}
.apps button {
    width: 34px;
    height: 22px;
}
.apps .open {
    width: 32px;
    border: 1px solid;
    border-color: #404040 #fff #fff #404040;
    background: #fff;
}
.tray {
    display: flex;
    align-items: center;
    gap: 8px;
    height: 22px;
    margin-left: auto;
    margin-right: 1px;
    padding: 0 3px 0 6px;
    border: 1px solid;
    border-color: #85817a #fff #fff #85817a;
}
.tray time {
    margin: 0 2px 0 8px;
    font-family: "DejaVu Sans Condensed", "DejaVu Sans", sans-serif;
}
```
